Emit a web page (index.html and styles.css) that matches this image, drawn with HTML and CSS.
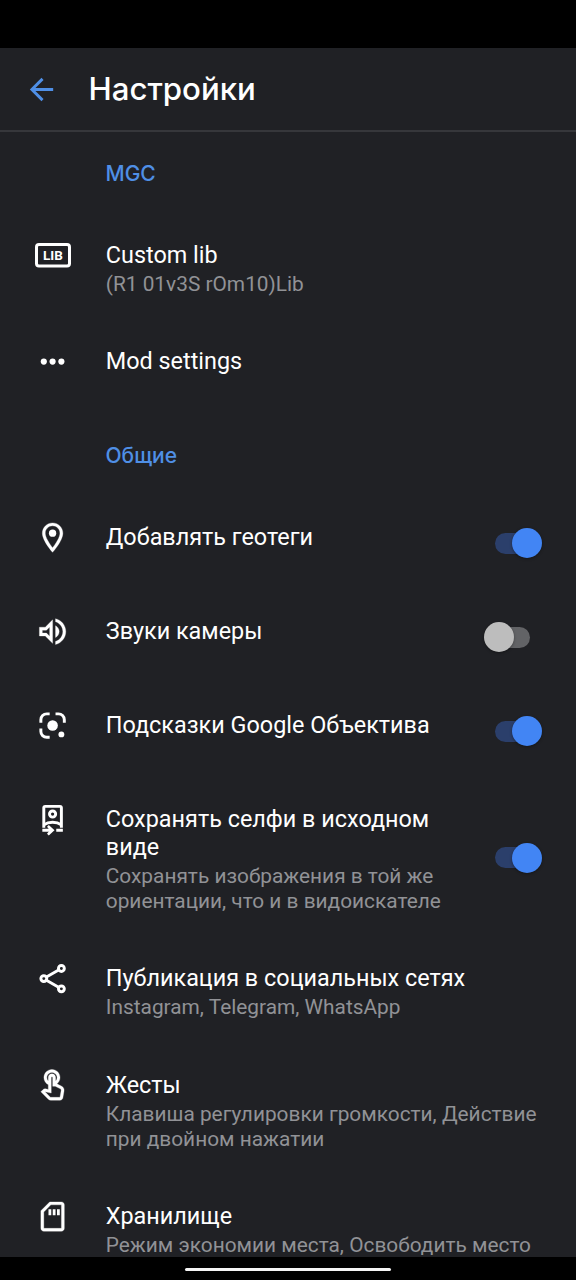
FILE: index.html
```html
<!DOCTYPE html>
<html lang="ru">
<head>
<meta charset="utf-8">
<title>Настройки</title>
<link rel="stylesheet" href="styles.css">
</head>
<body>
<div class="screen">
  <div class="status-bar"></div>
  <header class="header">
    <svg class="back" viewBox="0 0 24 24"><path d="M20 11H7.83l5.59-5.59L12 4l-8 8 8 8 1.41-1.41L7.83 13H20v-2z"/></svg>
    <h1 class="heading">Настройки</h1>
  </header>
  <main class="list">
    <h2 class="section section-first">MGC</h2>
    <div class="row">
      <svg class="icon icon-lib" viewBox="0 0 36 25"><rect x="1.5" y="1.5" width="33" height="21.5" rx="2.5" fill="none" stroke="#fff" stroke-width="3"/><text class="lib-text" x="18" y="17" text-anchor="middle">LIB</text></svg>
      <div class="body"><div class="title">Custom lib</div><div class="summary">(R1 01v3S rOm10)Lib</div></div>
    </div>
    <div class="row">
      <svg class="icon" viewBox="0 0 24 24"><circle cx="6" cy="12" r="2.1"/><circle cx="12" cy="12" r="2.1"/><circle cx="18" cy="12" r="2.1"/></svg>
      <div class="body"><div class="title">Mod settings</div></div>
    </div>
    <h2 class="section">Общие</h2>
    <div class="row">
      <svg class="icon" viewBox="0 0 24 24"><path class="bold" d="M12 2C8.13 2 5 5.13 5 9c0 5.25 7 13 7 13s7-7.75 7-13c0-3.87-3.13-7-7-7zM7 9c0-2.76 2.24-5 5-5s5 2.24 5 5c0 2.88-2.88 7.19-5 9.88C9.92 16.21 7 11.85 7 9z"/><circle cx="12" cy="9" r="2.5"/></svg>
      <div class="body"><div class="title">Добавлять геотеги</div></div>
      <div class="switch on"><span class="track"></span><span class="thumb"></span></div>
    </div>
    <div class="row">
      <svg class="icon" viewBox="0 0 24 24"><path class="bold" d="M3 9v6h4l5 5V4L7 9H3zm7-.17v6.34L7.83 13H5v-2h2.83L10 8.83zM16.5 12c0-1.77-1.02-3.29-2.5-4.03v8.05c1.48-.73 2.5-2.25 2.5-4.02zM14 3.23v2.06c2.89.86 5 3.54 5 6.71s-2.11 5.85-5 6.71v2.06c4.01-.91 7-4.49 7-8.77 0-4.28-2.99-7.86-7-8.77z"/></svg>
      <div class="body"><div class="title">Звуки камеры</div></div>
      <div class="switch"><span class="track"></span><span class="thumb"></span></div>
    </div>
    <div class="row">
      <svg class="icon" viewBox="0 0 24 24"><path class="line" d="M4 10V8a4 4 0 0 1 4-4h2M14 4h2a4 4 0 0 1 4 4v2M4 14v2a4 4 0 0 0 4 4h2"/><circle cx="12" cy="12" r="3.6"/><circle cx="18" cy="18" r="2"/></svg>
      <div class="body"><div class="title">Подсказки Google Объектива</div></div>
      <div class="switch on"><span class="track"></span><span class="thumb"></span></div>
    </div>
    <div class="row">
      <svg class="icon" viewBox="0 0 24 24"><path class="line" d="M6 17.6V4a1 1 0 0 1 1-1h10a1 1 0 0 1 1 1v13.6"/><circle class="line" cx="12" cy="8.2" r="2.1"/><path class="line" d="M6 15.6c3.4-2.4 8.6-2.4 12 0M5 19.3h6M14.5 19.3H19"/><path d="M9.4 15.7l3.9 3.6-3.9 3.6-1.2-1.2 1.9-2.4-1.900-2.400z"/></svg>
      <div class="body"><div class="title">Сохранять селфи в исходном виде</div><div class="summary">Сохранять изображения в той же ориентации, что и в видоискателе</div></div>
      <div class="switch on"><span class="track"></span><span class="thumb"></span></div>
    </div>
    <div class="row">
      <svg class="icon" viewBox="0 0 24 24"><path class="line" d="M7.8 10.9l8.3-4.7M7.8 13.1l8.3 4.8"/><circle class="line" cx="6" cy="12" r="2"/><circle class="line" cx="18" cy="5.1" r="2"/><circle class="line" cx="18" cy="19" r="2"/></svg>
      <div class="body"><div class="title">Публикация в социальных сетях</div><div class="summary">Instagram, Telegram, WhatsApp</div></div>
    </div>
    <div class="row">
      <svg class="icon" viewBox="0 0 24 24"><path class="bold" d="M18.19 12.44l-3.24-1.62c1.29-1 2.12-2.56 2.12-4.32 0-3.03-2.47-5.5-5.5-5.5s-5.5 2.47-5.5 5.5c0 2.13 1.22 3.98 3 4.89v3.26c-2.15-.46-2.02-.44-2.26-.44-.53 0-1.03.21-1.41.59L4 16.22l5.09 5.09c.43.44 1.03.69 1.65.69h6.3c.98 0 1.81-.7 1.97-1.67l.8-4.71c.22-1.3-.43-2.58-1.62-3.18zm-.35 2.85l-.8 4.71h-6.3c-.09 0-.17-.04-.24-.1l-3.68-3.68 4.25.89V6.5c0-.28.22-.5.5-.5s.5.22.5.5v6h1.76l3.46 1.73c.4.2.62.63.55 1.06zM8.07 6.5c0-1.93 1.57-3.5 3.5-3.5s3.5 1.57 3.5 3.5c0 .95-.38 1.81-1 2.44V6.5c0-1.38-1.12-2.5-2.5-2.5s-2.5 1.12-2.5 2.5v2.44c-.62-.63-1-1.49-1-2.44z"/></svg>
      <div class="body"><div class="title">Жесты</div><div class="summary">Клавиша регулировки громкости, Действие при двойном нажатии</div></div>
    </div>
    <div class="row">
      <svg class="icon" viewBox="0 0 24 24"><path class="bold" d="M18 2h-8L4 8v12c0 1.1.9 2 2 2h12c1.1 0 2-.9 2-2V4c0-1.1-.9-2-2-2zm0 18H6V8.830L10.830 4H18v16z"/><path d="M9.2 7h1.9v4H9.2zM12.1 7H14v4h-1.9zM15 7h1.9v4H15z"/></svg>
      <div class="body"><div class="title">Хранилище</div><div class="summary">Режим экономии места, Освободить место</div></div>
    </div>
  </main>
  <footer class="nav-bar"><div class="handle"></div></footer>
</div>
</body>
</html>
```
FILE: styles.css
```css
* { box-sizing: border-box; }
body { margin: 0; background: #000; }
.screen {
  width: 576px;
  height: 1280px;
  display: flex;
  flex-direction: column;
  overflow: hidden;
  background: #202125;
  color: #fff;
  font-family: Roboto, "Noto Sans", sans-serif;
}
.status-bar { flex: none; height: 48px; background: #000; }
.header {
  flex: none;
  height: 84px;
  display: flex;
  align-items: center;
  padding-left: 24px;
  border-bottom: 2px solid #36373b;
}
.back { width: 35px; height: 35px; fill: #4f8fe6; }
.heading {
  margin: 0 0 0 29.5px;
  font: 500 31.2px/40px Inter, "Open Sans", sans-serif;
}
.list { flex: 1; min-height: 0; overflow: hidden; }
.section {
  margin: 0;
  height: 82px;
  padding: 14px 0 0 105.5px;
  font: 500 21px/68px Inter, "Open Sans", sans-serif;
  color: #4f8fe6;
}
.section-first { height: 75.5px; padding-top: 7.5px; }
.row {
  display: flex;
  align-items: flex-start;
  min-height: 94px;
  padding: 33px 32px 17.4px 35px;
}
.icon {
  flex: none;
  width: 35.2px;
  height: 35.2px;
  margin: -3px 35.3px 0 .3px;
  fill: #fff;
}
.icon-lib { width: 36px; height: 25px; margin: 2.5px 34.8px 0 0; }
.lib-text { font: 700 13.5px Roboto, sans-serif; }
.line { fill: none; stroke: #fff; stroke-width: 2; }
.bold { stroke: #fff; stroke-width: .2; }
.body { flex: 1; min-width: 0; }
.title { font-size: 23.4px; line-height: 28px; }
.summary { margin-top: 3px; font-size: 20.85px; line-height: 25px; color: #919296; }
.switch {
  flex: none;
  align-self: center;
  display: grid;
  align-items: center;
  width: 58px;
  height: 30px;
  margin: -3.4px 2px 0 20px;
}
.track, .thumb { grid-area: 1 / 1; }
.track { width: 38px; height: 21px; margin-left: 8px; border-radius: 11px; background: #626366; }
.thumb { width: 30px; height: 30px; margin-left: -.5px; border-radius: 50%; background: #bdbdbd; box-shadow: 0 1px 3px rgba(0, 0, 0, .35); }
.on .track { margin-left: 11px; background: #2b3f6b; }
.on .thumb { margin-left: 28px; background: #4285f4; }
.nav-bar {
  flex: none;
  height: 23px;
  display: flex;
  justify-content: center;
  padding-top: 11px;
  background: #000;
}
.handle { width: 206px; height: 3px; border-radius: 2px; background: #f5f5f5; }
```
